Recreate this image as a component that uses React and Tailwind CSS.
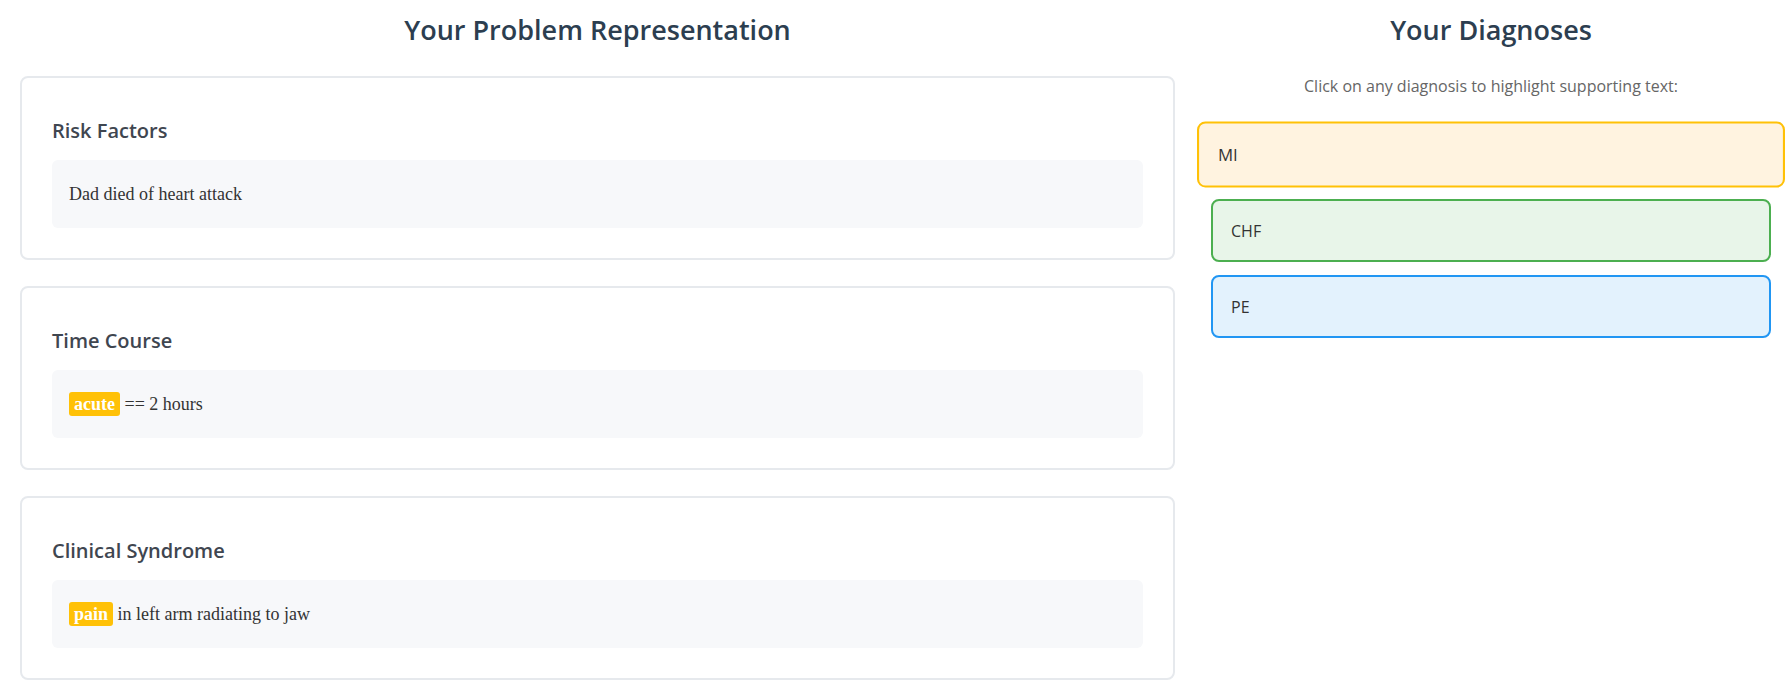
import React from "react";

const sections = [
  { title: "Risk Factors", parts: [{ text: "Dad died of heart attack" }] },
  { title: "Time Course", parts: [{ tag: "acute" }, { text: " == 2 hours" }] },
  { title: "Clinical Syndrome", parts: [{ tag: "pain" }, { text: " in left arm radiating to jaw" }] },
];

const diagnoses = [
  { name: "MI", cls: "bg-[#fff3e0] border-[#ffc107] scale-[1.05]" },
  { name: "CHF", cls: "bg-[#e8f5e9] border-[#4caf50]" },
  { name: "PE", cls: "bg-[#e3f2fd] border-[#2196f3]" },
];

export default function App() {
  return (
    <div className="flex bg-white pl-[20px] min-h-screen font-['Open_Sans',sans-serif] overflow-hidden">
      {/* Problem representation */}
      <div className="w-[1155px] shrink-0">
        <h2 className="text-center text-[27px] leading-[36px] font-semibold text-[#2c3e50] mt-[12px] mb-[28px]">
          Your Problem Representation
        </h2>
        <div className="flex flex-col gap-[26px]">
          {sections.map((s) => (
            <div
              key={s.title}
              className="border-2 border-[#e6e9ed] rounded-[8px] px-[30px] pt-[40px] pb-[30px] bg-white"
            >
              <h3 className="text-[20px] leading-[26px] font-semibold text-[#3f4650] mb-[16px]">
                {s.title}
              </h3>
              <div className="bg-[#f7f8fa] rounded-[6px] px-[17px] py-[20px] leading-[28px] text-[18px] text-[#333] font-['Liberation_Serif',serif]">
                {s.parts.map((p, i) =>
                  p.tag ? (
                    <span
                      key={i}
                      className="bg-[#ffc107] text-white font-bold rounded-[3px] px-[5px] py-[2px]"
                    >
                      {p.tag}
                    </span>
                  ) : (
                    <span key={i}>{p.text}</span>
                  )
                )}
              </div>
            </div>
          ))}
        </div>
      </div>

      {/* Diagnoses */}
      <div className="flex-1 ml-[22px]">
        <h2 className="text-center text-[27px] leading-[36px] font-semibold text-[#2c3e50] mt-[12px]">
          Your Diagnoses
        </h2>
        <p className="text-center text-[16px] leading-[24px] text-[#666] mt-[26px]">
          Click on any diagnosis to highlight supporting text:
        </p>
        <div className="flex flex-col gap-[13px] mt-[25px] mx-[14px]">
          {diagnoses.map((d) => (
            <div
              key={d.name}
              className={`h-[63px] flex items-center border-2 rounded-[8px] pl-[18px] text-[16px] text-[#333] cursor-pointer ${d.cls}`}
            >
              {d.name}
            </div>
          ))}
        </div>
      </div>
    </div>
  );
}
